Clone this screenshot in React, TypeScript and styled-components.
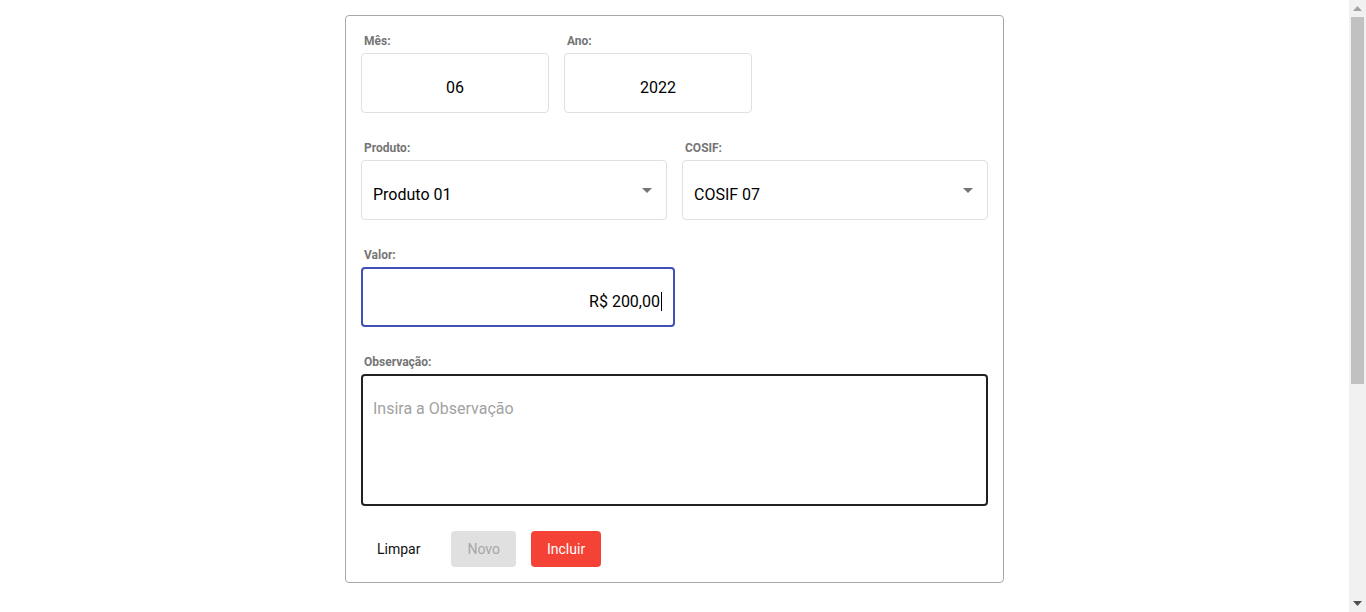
import React from 'react'
import styled, {createGlobalStyle} from 'styled-components'

const GlobalStyle = createGlobalStyle`
  html, body {
    margin: 0;
    padding: 0;
    background: #fff;
    font-family: Roboto, "Liberation Sans", Arial, sans-serif;
  }
  * {
    box-sizing: border-box;
  }
`

const Viewport = styled.div`
  display: flex;
  height: 100vh;
  overflow: hidden;
`

const Page = styled.div`
  flex: 1;
  padding-top: 15px;
`

const Scrollbar = styled.div`
  width: 17px;
  display: flex;
  flex-direction: column;
  background: #f1f1f1;
`

const ScrollButton = styled.div`
  height: 17px;
  display: flex;
  align-items: center;
  justify-content: center;
`

const ScrollTrack = styled.div`
  flex: 1;
  padding: 0 2px;
`

const ScrollThumb = styled.div`
  height: 367px;
  background: #c1c1c1;
`

const Card = styled.form`
  width: 659px;
  margin: 0 auto;
  border: 1px solid #a8a8a8;
  border-radius: 4px;
  padding: 17px 15px 15px;
  display: flex;
  flex-direction: column;
  gap: 27px;
`

const Row = styled.div`
  display: flex;
  gap: 15px;
`

const Field = styled.div<{$width?: number}>`
  display: flex;
  flex-direction: column;
  width: ${p => (p.$width ? `${p.$width}px` : '100%')};
`

const Label = styled.label`
  font-size: 12px;
  line-height: 14px;
  font-weight: 700;
  color: #757575;
  margin: 1px 0 5px 3px;
`

const Box = styled.div<{$align?: 'left' | 'center' | 'right'; $focused?: boolean}>`
  position: relative;
  height: 60px;
  display: flex;
  align-items: center;
  justify-content: ${p =>
    p.$align === 'center' ? 'center' : p.$align === 'right' ? 'flex-end' : 'flex-start'};
  padding: 9px 11px 0;
  border: ${p => (p.$focused ? '2px solid #3f51b5' : '1px solid #e0e0e0')};
  border-radius: 4px;
  font-size: 16px;
  line-height: 19px;
  color: #000;
`

const Caret = styled.span`
  display: inline-block;
  width: 1px;
  height: 19px;
  background: #000;
  margin-left: 1px;
`

const Arrow = styled.svg`
  position: absolute;
  right: 7px;
  top: 17px;
  width: 24px;
  height: 24px;
  fill: #757575;
`

const TextArea = styled.textarea`
  height: 132px;
  resize: none;
  border: 2px solid #212121;
  border-radius: 4px;
  padding: 23px 10px 21px;
  font-family: Roboto, "Liberation Sans", Arial, sans-serif;
  font-size: 16px;
  line-height: 19px;
  color: #000;
  outline: none;

  &::placeholder {
    color: #a2a2a2;
  }
`

const Actions = styled.div`
  display: flex;
  gap: 15px;
  margin-top: -2px;
`

const Button = styled.button<{$variant: 'text' | 'disabled' | 'primary'}>`
  height: 36px;
  padding: 0 16px;
  border: none;
  border-radius: 4px;
  font-family: Roboto, "Liberation Sans", Arial, sans-serif;
  font-size: 14px;
  font-weight: 400;
  background: ${p =>
    p.$variant === 'primary' ? '#f44336' : p.$variant === 'disabled' ? '#e0e0e0' : 'transparent'};
  color: ${p =>
    p.$variant === 'primary' ? '#fff' : p.$variant === 'disabled' ? '#a6a6a6' : '#111'};
  cursor: pointer;
`

const DropArrow = () => (
  <Arrow viewBox="0 0 24 24">
    <path d="M7 10l5 5 5-5z" />
  </Arrow>
)

const ScrollArrow = ({up, color}: {up?: boolean; color: string}) => (
  <svg width="9" height="5" viewBox="0 0 9 5">
    <path d={up ? 'M0 5L4.5 0 9 5z' : 'M0 0L4.5 5 9 0z'} fill={color} />
  </svg>
)

export default function App() {
  return (
    <>
      <GlobalStyle />
      <Viewport>
        <Page>
          <Card onSubmit={e => e.preventDefault()}>
            <Row>
              <Field $width={188}>
                <Label>Mês:</Label>
                <Box $align="center">06</Box>
              </Field>
              <Field $width={188}>
                <Label>Ano:</Label>
                <Box $align="center">2022</Box>
              </Field>
            </Row>
            <Row>
              <Field $width={306}>
                <Label>Produto:</Label>
                <Box>
                  Produto 01
                  <DropArrow />
                </Box>
              </Field>
              <Field $width={306}>
                <Label>COSIF:</Label>
                <Box>
                  COSIF 07
                  <DropArrow />
                </Box>
              </Field>
            </Row>
            <Row>
              <Field $width={314}>
                <Label>Valor:</Label>
                <Box $align="right" $focused>
                  R$ 200,00
                  <Caret />
                </Box>
              </Field>
            </Row>
            <Field>
              <Label>Observação:</Label>
              <TextArea placeholder="Insira a Observação" />
            </Field>
            <Actions>
              <Button type="button" $variant="text">Limpar</Button>
              <Button type="button" $variant="disabled" disabled>Novo</Button>
              <Button type="submit" $variant="primary">Incluir</Button>
            </Actions>
          </Card>
        </Page>
        <Scrollbar>
          <ScrollButton>
            <ScrollArrow up color="#a3a3a3" />
          </ScrollButton>
          <ScrollTrack>
            <ScrollThumb />
          </ScrollTrack>
          <ScrollButton>
            <ScrollArrow color="#505050" />
          </ScrollButton>
        </Scrollbar>
      </Viewport>
    </>
  )
}
